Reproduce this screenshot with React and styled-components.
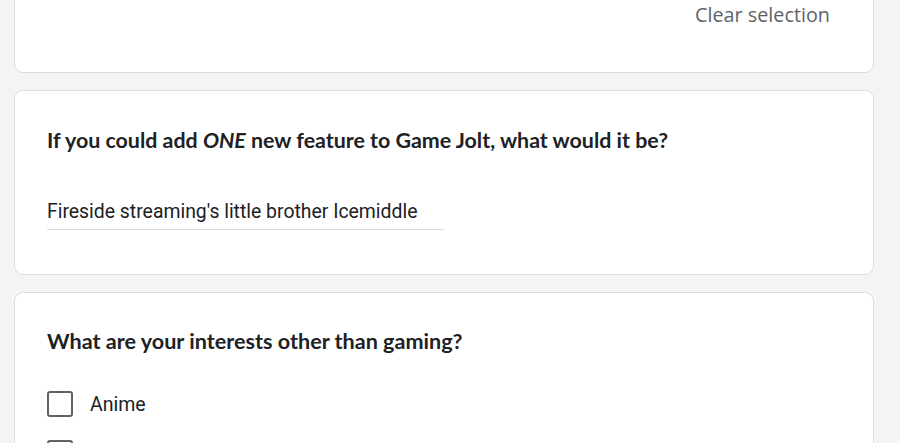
import React from "react";
import styled, { createGlobalStyle } from "styled-components";

const Global = createGlobalStyle`
  html, body { margin: 0; padding: 0; background: #f4f4f4; }
  body { overflow: hidden; }
`;

const Page = styled.div`
  display: flex;
  flex-direction: column;
  gap: 17px;
  width: 860px;
  margin: -60px 0 0 14px;
`;

const Card = styled.section`
  box-sizing: border-box;
  background: #fff;
  border: 1px solid #dadce0;
  border-radius: 9px;
  padding: ${(p) => p.$pad || "34px 32px 44px"};
  display: flex;
  flex-direction: column;
`;

const ClearRow = styled.div`
  display: flex;
  justify-content: flex-end;
  padding-right: 43px;
`;

const ClearButton = styled.span`
  font-family: "Open Sans", "Roboto", sans-serif;
  font-size: 19.8px;
  line-height: 24px;
  color: #5f6368;
`;

const Title = styled.h2`
  margin: 0;
  font-family: "Lato", sans-serif;
  font-weight: 700;
  font-size: ${(p) => p.$size || "21.6px"};
  line-height: 30px;
  color: #202124;
  em { font-style: italic; }
`;

const Answer = styled.div`
  margin-top: 45px;
  width: 397px;
  padding-bottom: 5px;
  border-bottom: 1px solid #dadce0;
  font-family: "Roboto", sans-serif;
  font-size: 19.4px;
  line-height: 24px;
  color: #202124;
`;

const Options = styled.div`
  margin-top: 35px;
  display: flex;
  flex-direction: column;
  gap: 23px;
`;

const Option = styled.label`
  display: flex;
  align-items: center;
  gap: 17px;
  min-height: 26px;
  font-family: "Roboto", sans-serif;
  font-size: 19.5px;
  color: #202124;
`;

const Box = styled.span`
  box-sizing: border-box;
  width: 26px;
  height: 26px;
  border: 2.5px solid #5f6368;
  border-radius: 3px;
  flex-shrink: 0;
`;

export default function App() {
  return (
    <>
      <Global />
      <Page>
        <Card $pad="62px 0 45px">
          <ClearRow>
            <ClearButton>Clear selection</ClearButton>
          </ClearRow>
        </Card>
        <Card>
          <Title $size="21.4px">
            If you could add <em>ONE</em> new feature to Game Jolt, what would it be?
          </Title>
          <Answer>Fireside streaming's little brother Icemiddle</Answer>
        </Card>
        <Card $pad="33px 32px 44px">
          <Title>What are your interests other than gaming?</Title>
          <Options>
            <Option>
              <Box />
              Anime
            </Option>
            <Option>
              <Box />
            </Option>
          </Options>
        </Card>
      </Page>
    </>
  );
}
